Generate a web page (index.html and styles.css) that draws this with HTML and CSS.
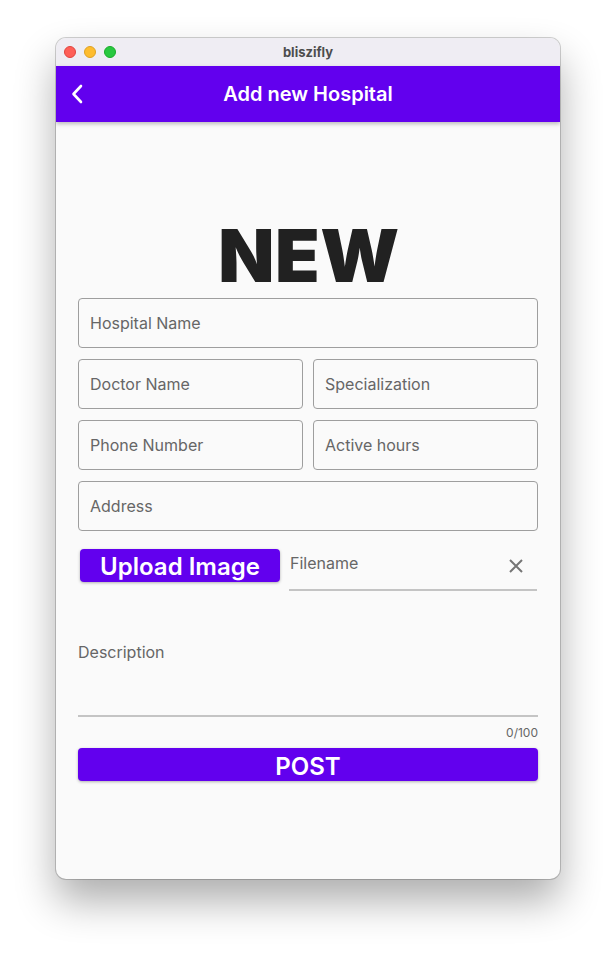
FILE: index.html
```html
<!DOCTYPE html>
<html>
<head>
<meta charset="utf-8">
<link rel="stylesheet" href="styles.css">
</head>
<body>
<div class="stage">
  <div class="window">
    <div class="titlebar">
      <div class="lights">
        <span class="light red"></span>
        <span class="light yellow"></span>
        <span class="light green"></span>
      </div>
      <div class="wtitle">bliszifly</div>
    </div>
    <div class="appbar">
      <svg class="back" width="24" height="24" viewBox="0 0 24 24"><path d="M15 4 L7.5 12 L15 20" fill="none" stroke="#fff" stroke-width="2.6" stroke-linecap="round" stroke-linejoin="round"/></svg>
      <div class="apptitle">Add new Hospital</div>
    </div>
    <div class="content">
      <div class="hero">NEW</div>
      <div class="field full">Hospital Name</div>
      <div class="row">
        <div class="field">Doctor Name</div>
        <div class="field">Specialization</div>
      </div>
      <div class="row">
        <div class="field">Phone Number</div>
        <div class="field">Active hours</div>
      </div>
      <div class="field full">Address</div>
      <div class="upload-row">
        <div class="upload-btn">Upload Image</div>
        <div class="filename">
          <span class="fn-label">Filename</span>
          <svg class="clear" width="18" height="18" viewBox="0 0 18 18"><path d="M3 3 L15 15 M15 3 L3 15" stroke="#757575" stroke-width="2"/></svg>
        </div>
      </div>
      <div class="desc">
        <div class="desc-label">Description</div>
      </div>
      <div class="counter">0/100</div>
      <div class="post">POST</div>
    </div>
  </div>
</div>
</body>
</html>
```

FILE: styles.css
```css
html, body {
  margin: 0;
  padding: 0;
  background: #ffffff;
}
.stage {
  padding: 38px 0 0 56px;
  width: 616px;
  height: 953px;
  box-sizing: border-box;
}
.window {
  width: 504px;
  height: 841px;
  border-radius: 10px;
  overflow: hidden;
  background: #fafafa;
  box-shadow: 0 0 0 1px rgba(0,0,0,0.18), 0 22px 40px rgba(0,0,0,0.32);
  display: flex;
  flex-direction: column;
  font-family: Inter, "Noto Sans", sans-serif;
}
.titlebar {
  height: 28px;
  background: #efedf3;
  position: relative;
  display: flex;
  align-items: center;
  justify-content: center;
}
.lights {
  position: absolute;
  left: 8px;
  top: 8px;
  display: flex;
  gap: 8px;
}
.light {
  width: 12px;
  height: 12px;
  border-radius: 50%;
  box-sizing: border-box;
}
.red { background: #fe5f57; border: 0.5px solid #e0443e; }
.yellow { background: #febc2e; border: 0.5px solid #dea123; }
.green { background: #28c840; border: 0.5px solid #1aab29; }
.wtitle {
  font-size: 13px;
  font-weight: 700;
  color: #4d4d4d;
  font-family: Inter, sans-serif;
}
.appbar {
  height: 56px;
  background: #6200ee;
  position: relative;
  display: flex;
  align-items: center;
  justify-content: center;
  box-shadow: 0 2px 4px rgba(0,0,0,0.25);
  z-index: 1;
}
.back {
  position: absolute;
  left: 10px;
  top: 16px;
}
.apptitle {
  color: #fff;
  font-size: 20px;
  font-weight: 600;
}
.content {
  padding: 0 22px;
  display: flex;
  flex-direction: column;
}
.hero {
  font-family: Inter, sans-serif;
  font-weight: 900;
  font-size: 73px;
  color: #212121;
  text-align: center;
  line-height: 72px;
  margin-top: 98px;
  letter-spacing: 0.5px;
  height: 78px;
  padding-left: 2px;
}
.field {
  height: 50px;
  box-sizing: border-box;
  border: 1px solid #9e9e9e;
  border-radius: 4px;
  padding: 0 11px;
  display: flex;
  align-items: center;
  font-size: 16px;
  color: #666;
  flex: 1;
}
.full { margin-bottom: 11px; flex: none; }
.row {
  display: flex;
  gap: 10px;
  margin-bottom: 11px;
}
.upload-row {
  display: flex;
  align-items: flex-start;
  margin-top: 7px;
  height: 53px;
}
.upload-btn {
  margin-left: 2px;
  width: 200px;
  height: 33px;
  background: #6200ee;
  border-radius: 4px;
  color: #fff;
  font-size: 24px;
  font-weight: 600;
  display: flex;
  align-items: center;
  justify-content: center;
  padding-top: 1px;
  box-sizing: border-box;
  box-shadow: 0 1px 3px rgba(0,0,0,0.3);
}
.filename {
  margin-left: 9px;
  flex: 1;
  height: 42px;
  box-sizing: border-box;
  border-bottom: 2px solid #c4c4c4;
  display: flex;
  align-items: flex-start;
  justify-content: space-between;
  padding-top: 4px;
  margin-right: 1px;
}
.fn-label {
  font-size: 16px;
  color: #666;
  padding-left: 1px;
}
.clear {
  margin-right: 12px;
  margin-top: 4px;
}
.desc {
  margin-top: 40px;
  height: 75px;
  box-sizing: border-box;
  border-bottom: 2px solid #c4c4c4;
}
.desc-label {
  font-size: 16px;
  color: #666;
}
.counter {
  text-align: right;
  font-size: 12px;
  color: #666;
  margin-top: 8px;
  height: 23px;
}
.post {
  height: 33px;
  background: #6200ee;
  border-radius: 4px;
  color: #fff;
  font-size: 24px;
  font-weight: 600;
  display: flex;
  align-items: center;
  justify-content: center;
  padding-top: 3px;
  box-sizing: border-box;
  box-shadow: 0 1px 3px rgba(0,0,0,0.3);
}
```
